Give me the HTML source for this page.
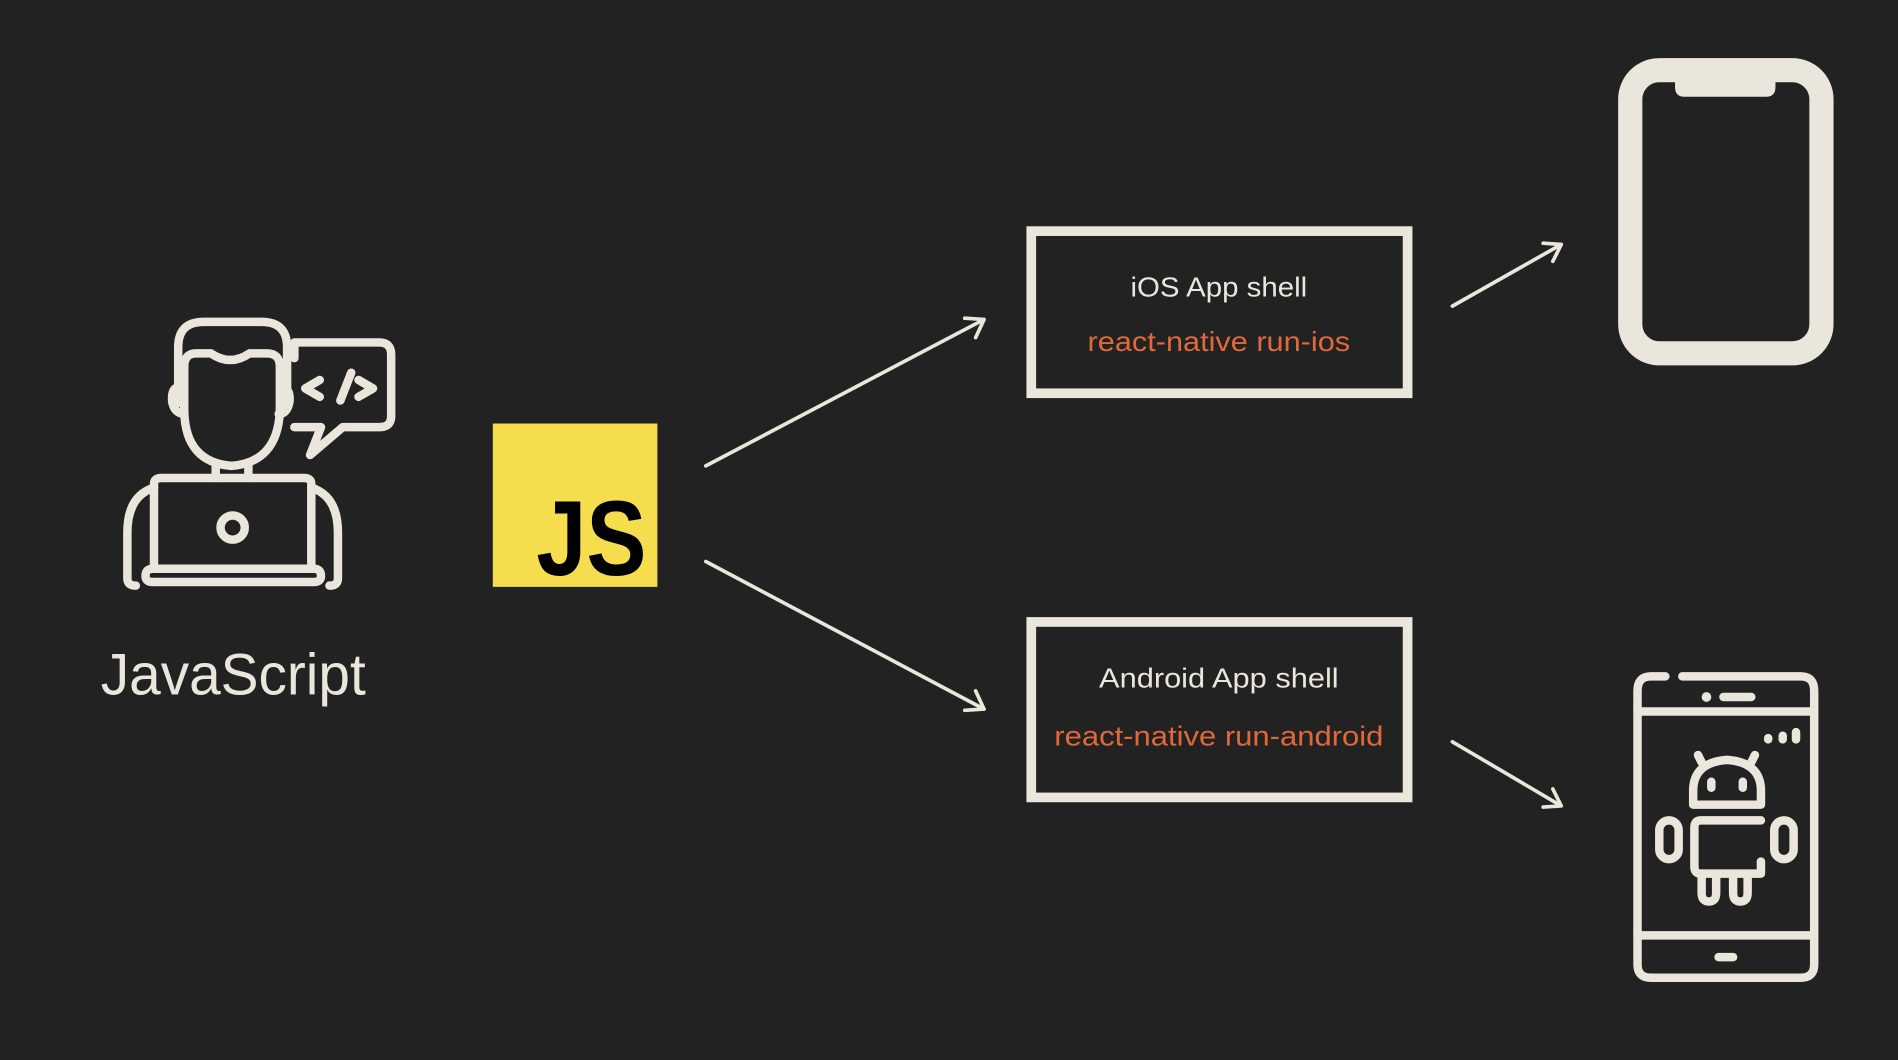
<!DOCTYPE html>
<html><head><meta charset="utf-8"><style>
html,body{margin:0;padding:0;background:#222222;}
svg{display:block}
</style></head><body>
<svg width="1898" height="1060" viewBox="0 0 1568 876" xmlns="http://www.w3.org/2000/svg">
<rect width="1568" height="876" fill="#222222"/>
<g fill="none" stroke="#ebe6dc" stroke-width="7" stroke-linecap="round" stroke-linejoin="round">
  <!-- person -->
  <path d="M147,333 L147,287 Q147,266 168,266 L216,266 Q237,266 237,287 L237,333"/>
  <path d="M152,334 L152,303 Q152,292 162,292 L174,292 Q190,303 206,292 L220,292 Q231,292 231,303 L231,340 Q229,382 191,385 Q153,382 152,340 Z"/>
  <path d="M148,320 Q141,320 142,332 Q144,342 152,342"/>
  <path d="M232,320 Q240,320 239,332 Q237,342 230,342"/>
  <path d="M178,383 L178,395 M205,383 L205,395"/>
  <path d="M127,470 L127,400 Q127,395 133,395 L251,395 Q257,395 257,400 L257,470"/>
  <path d="M120,476 Q120,470 126,470 L259,470 Q265,470 265,476 Q265,481 259,481 L126,481 Q120,481 120,476 Z"/>
  <path d="M127,403 Q105,410 105,440 L105,478 Q105,484 112,484"/>
  <path d="M257,403 Q279,410 279,440 L279,478 Q279,484 272,484"/>
  <circle cx="192" cy="436" r="10"/>
  <path d="M243,296 L243,283 L313,283 Q323,283 323,293 L323,344 Q323,353 313,353 L283,353 L256,376 L265,353 L243,353"/>
  <path d="M264,314 L252,321 L264,328 M281,331 L290,308 M296,314 L308,321 L296,328"/>
  <!-- arrows -->
  <path d="M583,385 L813,264 M797,263 L813,264 L806,279" stroke-width="3"/>
  <path d="M583,464 L813,586 M806,571 L813,586 L797,587" stroke-width="3"/>
  <path d="M1200,253 L1290,202 M1275,201 L1290,202 L1283,216" stroke-width="3"/>
  <path d="M1200,613 L1290,666 M1283,652 L1290,666 L1275,667" stroke-width="3"/>
  <!-- android phone -->
  <path d="M1376,559 L1364,559 Q1353,559 1353,571 L1353,797 Q1353,808 1364,808 L1488,808 Q1499,808 1499,797 L1499,571 Q1499,559 1488,559 L1390,559"/>
  <path d="M1353,588 L1499,588 M1353,773 L1499,773"/>
  <path d="M1424,576 L1447,576 M1420,791 L1432,791"/>
  <path d="M1461,610 L1461,611 M1473,608 L1473,611 M1484,605 L1484,611"/>
  <path d="M1399,665 L1399,652 Q1400,630 1427,628 Q1454,630 1455,652 L1455,665 Z"/>
  <path d="M1406,630 L1403,624 M1447,630 L1450,624"/>
  <path d="M1414,646 L1414,651 M1440,646 L1440,651"/>
  <path d="M1455,678 L1405,678 Q1400,678 1400,684 L1400,716 Q1400,722 1405,722 L1455,722 L1455,712"/>
  <path d="M1406,722 L1406,738 Q1406,745 1412,745 Q1418,745 1418,738 L1418,722 M1432,722 L1432,738 Q1432,745 1438,745 Q1444,745 1444,738 L1444,722"/>
  <rect x="1371" y="678" width="16" height="32" rx="8"/>
  <rect x="1466" y="678" width="16" height="32" rx="8"/>
  <!-- iphone -->
  <rect x="1347" y="58" width="158" height="234" rx="24" stroke-width="20"/>
</g>
<circle cx="1410" cy="576" r="4" fill="#ebe6dc"/>
<path d="M1384,66 L1467,66 L1467,72 Q1467,80 1459,80 L1392,80 Q1384,80 1384,72 Z" fill="#ebe6dc"/>
<!-- JS -->
<rect x="407" y="350" width="136" height="135" fill="#f5dd4e"/>
<text x="443" y="475" font-family="Liberation Sans, sans-serif" font-weight="bold" font-size="88" fill="#000" textLength="91" lengthAdjust="spacingAndGlyphs">JS</text>
<text x="83" y="574" font-family="Liberation Sans, sans-serif" font-size="48" fill="#ebe6dc" textLength="219" lengthAdjust="spacingAndGlyphs">JavaScript</text>
<!-- boxes -->
<rect x="852" y="191" width="311" height="134" fill="none" stroke="#ebe6dc" stroke-width="8"/>
<rect x="852" y="514" width="311" height="145" fill="none" stroke="#ebe6dc" stroke-width="8"/>
<g font-family="Liberation Sans, sans-serif" font-size="23" text-anchor="middle">
  <text x="1007" y="245" fill="#ebe6dc" textLength="146" lengthAdjust="spacingAndGlyphs">iOS App shell</text>
  <text x="1007" y="290" fill="#e0683a" textLength="217" lengthAdjust="spacingAndGlyphs">react-native run-ios</text>
  <text x="1007" y="568" fill="#ebe6dc" textLength="198" lengthAdjust="spacingAndGlyphs">Android App shell</text>
  <text x="1007" y="616" fill="#e0683a" textLength="272" lengthAdjust="spacingAndGlyphs">react-native run-android</text>
</g>
</svg>
</body></html>
